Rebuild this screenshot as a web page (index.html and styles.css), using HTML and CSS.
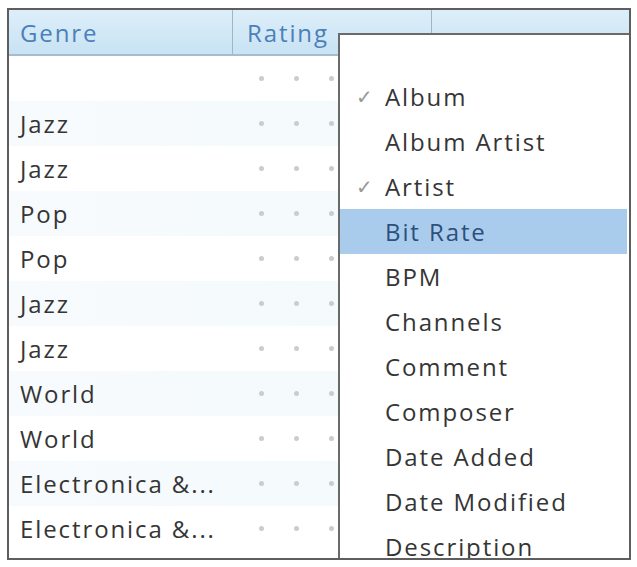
FILE: index.html
```html
<!DOCTYPE html>
<html>
<head>
<meta charset="utf-8">
<link rel="stylesheet" href="styles.css">
</head>
<body>
<div class="frame">
  <div class="header">
    <div class="hcell genre">Genre</div>
    <div class="hcell rating">Rating</div>
    <div class="hcell rest"></div>
  </div>
  <div class="rows">
    <div class="row"><div class="cell genre"></div><div class="cell stars"><i></i><i></i><i></i></div></div>
    <div class="row alt"><div class="cell genre">Jazz</div><div class="cell stars"><i></i><i></i><i></i></div></div>
    <div class="row"><div class="cell genre">Jazz</div><div class="cell stars"><i></i><i></i><i></i></div></div>
    <div class="row alt"><div class="cell genre">Pop</div><div class="cell stars"><i></i><i></i><i></i></div></div>
    <div class="row"><div class="cell genre">Pop</div><div class="cell stars"><i></i><i></i><i></i></div></div>
    <div class="row alt"><div class="cell genre">Jazz</div><div class="cell stars"><i></i><i></i><i></i></div></div>
    <div class="row"><div class="cell genre">Jazz</div><div class="cell stars"><i></i><i></i><i></i></div></div>
    <div class="row alt"><div class="cell genre">World</div><div class="cell stars"><i></i><i></i><i></i></div></div>
    <div class="row"><div class="cell genre">World</div><div class="cell stars"><i></i><i></i><i></i></div></div>
    <div class="row alt"><div class="cell genre">Electronica &amp;...</div><div class="cell stars"><i></i><i></i><i></i></div></div>
    <div class="row"><div class="cell genre">Electronica &amp;...</div><div class="cell stars"><i></i><i></i><i></i></div></div>
  </div>
  <div class="menu">
    <div class="item"><span class="check">&#10003;</span>Album</div>
    <div class="item">Album Artist</div>
    <div class="item"><span class="check">&#10003;</span>Artist</div>
    <div class="item active">Bit Rate</div>
    <div class="item">BPM</div>
    <div class="item">Channels</div>
    <div class="item">Comment</div>
    <div class="item">Composer</div>
    <div class="item">Date Added</div>
    <div class="item">Date Modified</div>
    <div class="item">Description</div>
  </div>
</div>
</body>
</html>
```

FILE: styles.css
```css
html, body {
  margin: 0;
  padding: 0;
  background: #ffffff;
}
body {
  font-family: "Open Sans", "Noto Sans", sans-serif;
  font-size: 24px;
  letter-spacing: 1.9px;
  color: #353535;
}
.frame {
  position: relative;
  margin: 8px 0 0 7px;
  width: 620px;
  height: 548px;
  border: 2px solid #5e5e5e;
  overflow: hidden;
  background: #ffffff;
}
.header {
  display: flex;
  height: 44px;
  background: linear-gradient(#ddeef9, #c8e3f4);
  border-bottom: 2px solid #a9bccb;
}
.hcell {
  display: flex;
  align-items: center;
  color: #4b80b8;
  padding-left: 11px;
  box-sizing: border-box;
}
.hcell.genre {
  width: 224px;
  border-right: 1px solid #9fb6c8;
}
.hcell.rating {
  width: 199px;
  padding-left: 14px;
  border-right: 1px solid #9fb6c8;
}
.hcell.rest {
  flex: 1;
}
.rows {
  display: flex;
  flex-direction: column;
}
.row {
  display: flex;
  height: 45px;
  align-items: center;
  background: #ffffff;
}
.row.alt {
  background: linear-gradient(90deg, #f7fbfd, #f2f8fc);
}
.cell.genre {
  width: 224px;
  padding-left: 11px;
  box-sizing: border-box;
  white-space: nowrap;
}
.cell.stars {
  display: flex;
  gap: 30px;
  padding-left: 26px;
}
.cell.stars i {
  display: block;
  width: 5px;
  height: 5px;
  border-radius: 50%;
  background: #c9cdd1;
}
.menu {
  position: absolute;
  left: 329px;
  top: 23px;
  right: 0;
  bottom: 0;
  background: #ffffff;
  border-left: 2px solid #6a6a6a;
  border-top: 2px solid #6a6a6a;
  padding-top: 39px;
  box-sizing: border-box;
}
.item {
  position: relative;
  height: 45px;
  line-height: 45px;
  padding-left: 45px;
  white-space: nowrap;
}
.item.active {
  background: #aaccec;
  color: #2c4f7e;
  margin-right: 2px;
}
.check {
  position: absolute;
  left: 16px;
  top: 0;
  color: #9a9a9a;
  font-size: 20px;
  letter-spacing: 0;
}
```
